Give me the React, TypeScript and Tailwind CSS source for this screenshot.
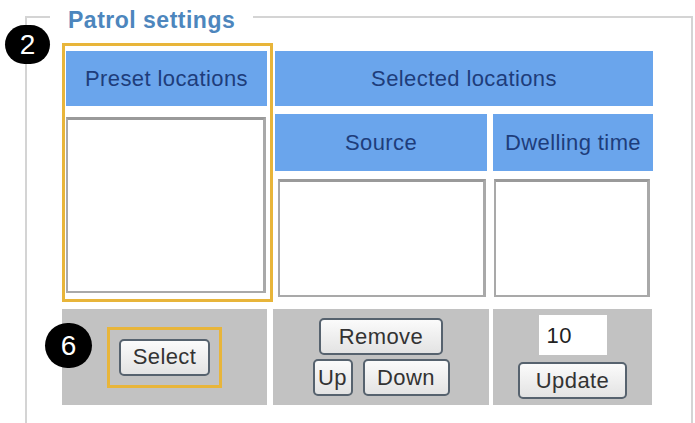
import React from "react";

function Btn({ label, w }: { label: string; w: string }) {
  return (
    <button
      className={`${w} h-[37px] rounded-[5px] border-2 border-[#56626e] bg-gradient-to-b from-[#fbfbfb] to-[#e3e3e3] text-[22px] leading-none tracking-[0.4px] text-[#333333] flex items-center justify-center`}
    >
      {label}
    </button>
  );
}

function Header({ children, className = "" }: { children: React.ReactNode; className?: string }) {
  return (
    <div
      className={`bg-[#6aa5ec] text-[#1e3d7b] text-[22px] tracking-[0.4px] flex items-center justify-center ${className}`}
    >
      {children}
    </div>
  );
}

function ListBox({ className = "" }: { className?: string }) {
  return (
    <div
      className={`bg-white border-2 border-[#a9a9a9] border-t-[3px] border-t-[#9a9a9a] border-r-[3px] ${className}`}
    />
  );
}

function Badge({ n, className }: { n: string; className: string }) {
  return (
    <div
      className={`absolute rounded-full bg-black text-white text-[28px] leading-none flex items-center justify-center ${className}`}
    >
      {n}
    </div>
  );
}

export default function App() {
  return (
    <div className="relative w-[695px] h-[423px] overflow-hidden bg-white pt-[2px] pl-[25px] font-['Liberation_Sans',Arial,sans-serif]">
      <fieldset className="w-[668px] h-[440px] border-2 border-[#d4d4d4] p-0 m-0">
        <legend className="ml-[23px] px-[18px] pt-[6px] text-[23px] leading-[24px] font-bold tracking-[0.5px] text-[#4d86bd]">
          Patrol settings
        </legend>
        <div className="pl-[38px] pt-[19px]">
          <div className="relative grid grid-cols-[204px_212px_160px] grid-rows-[55px_57px_122px_96px] gap-x-[6px] gap-y-[8px]">
            {/* header row */}
            <Header className="ml-[1px] mr-[2px]">Preset locations</Header>
            <Header className="col-span-2">Selected locations</Header>

            {/* preset list spans the sub-header and list rows */}
            <div className="row-span-2 pt-[3px] pb-[8px] pl-[1px] pr-[3px] flex">
              <ListBox className="flex-1" />
            </div>
            <Header>Source</Header>
            <Header>Dwelling time</Header>

            <div className="pl-[3px] pr-[1px] pb-[4px] flex">
              <ListBox className="flex-1" />
            </div>
            <div className="pl-[1px] pr-[3px] pb-[4px] flex">
              <ListBox className="flex-1" />
            </div>

            {/* action row */}
            <div className="bg-[#c2c2c2] -ml-[3px] mr-[2px] flex items-center justify-center">
              <div className="border-[3px] border-[#e8b53a] p-[9px]">
                <Btn label="Select" w="w-[91px]" />
              </div>
            </div>
            <div className="bg-[#c2c2c2] -ml-[2px] mr-[-2px] flex flex-col items-center justify-center gap-[4px]">
              <Btn label="Remove" w="w-[124px]" />
              <div className="flex gap-[10px]">
                <Btn label="Up" w="w-[40px]" />
                <Btn label="Down" w="w-[87px]" />
              </div>
            </div>
            <div className="bg-[#c2c2c2] mr-[1px] flex flex-col items-center justify-center gap-[7px]">
              <div className="w-[68px] h-[40px] bg-white pl-[8px] text-[22px] tracking-[0.4px] text-[#222] flex items-center">
                10
              </div>
              <Btn label="Update" w="w-[109px]" />
            </div>

            {/* highlight around the preset column */}
            <div className="absolute -left-[3px] -top-[8px] w-[211px] h-[259px] border-[3px] border-[#e8b53a] pointer-events-none" />
          </div>
        </div>
      </fieldset>

      <Badge n="2" className="left-[5px] top-[25px] w-[45px] h-[39px]" />
      <Badge n="6" className="left-[45px] top-[323px] w-[47px] h-[45px]" />
    </div>
  );
}
